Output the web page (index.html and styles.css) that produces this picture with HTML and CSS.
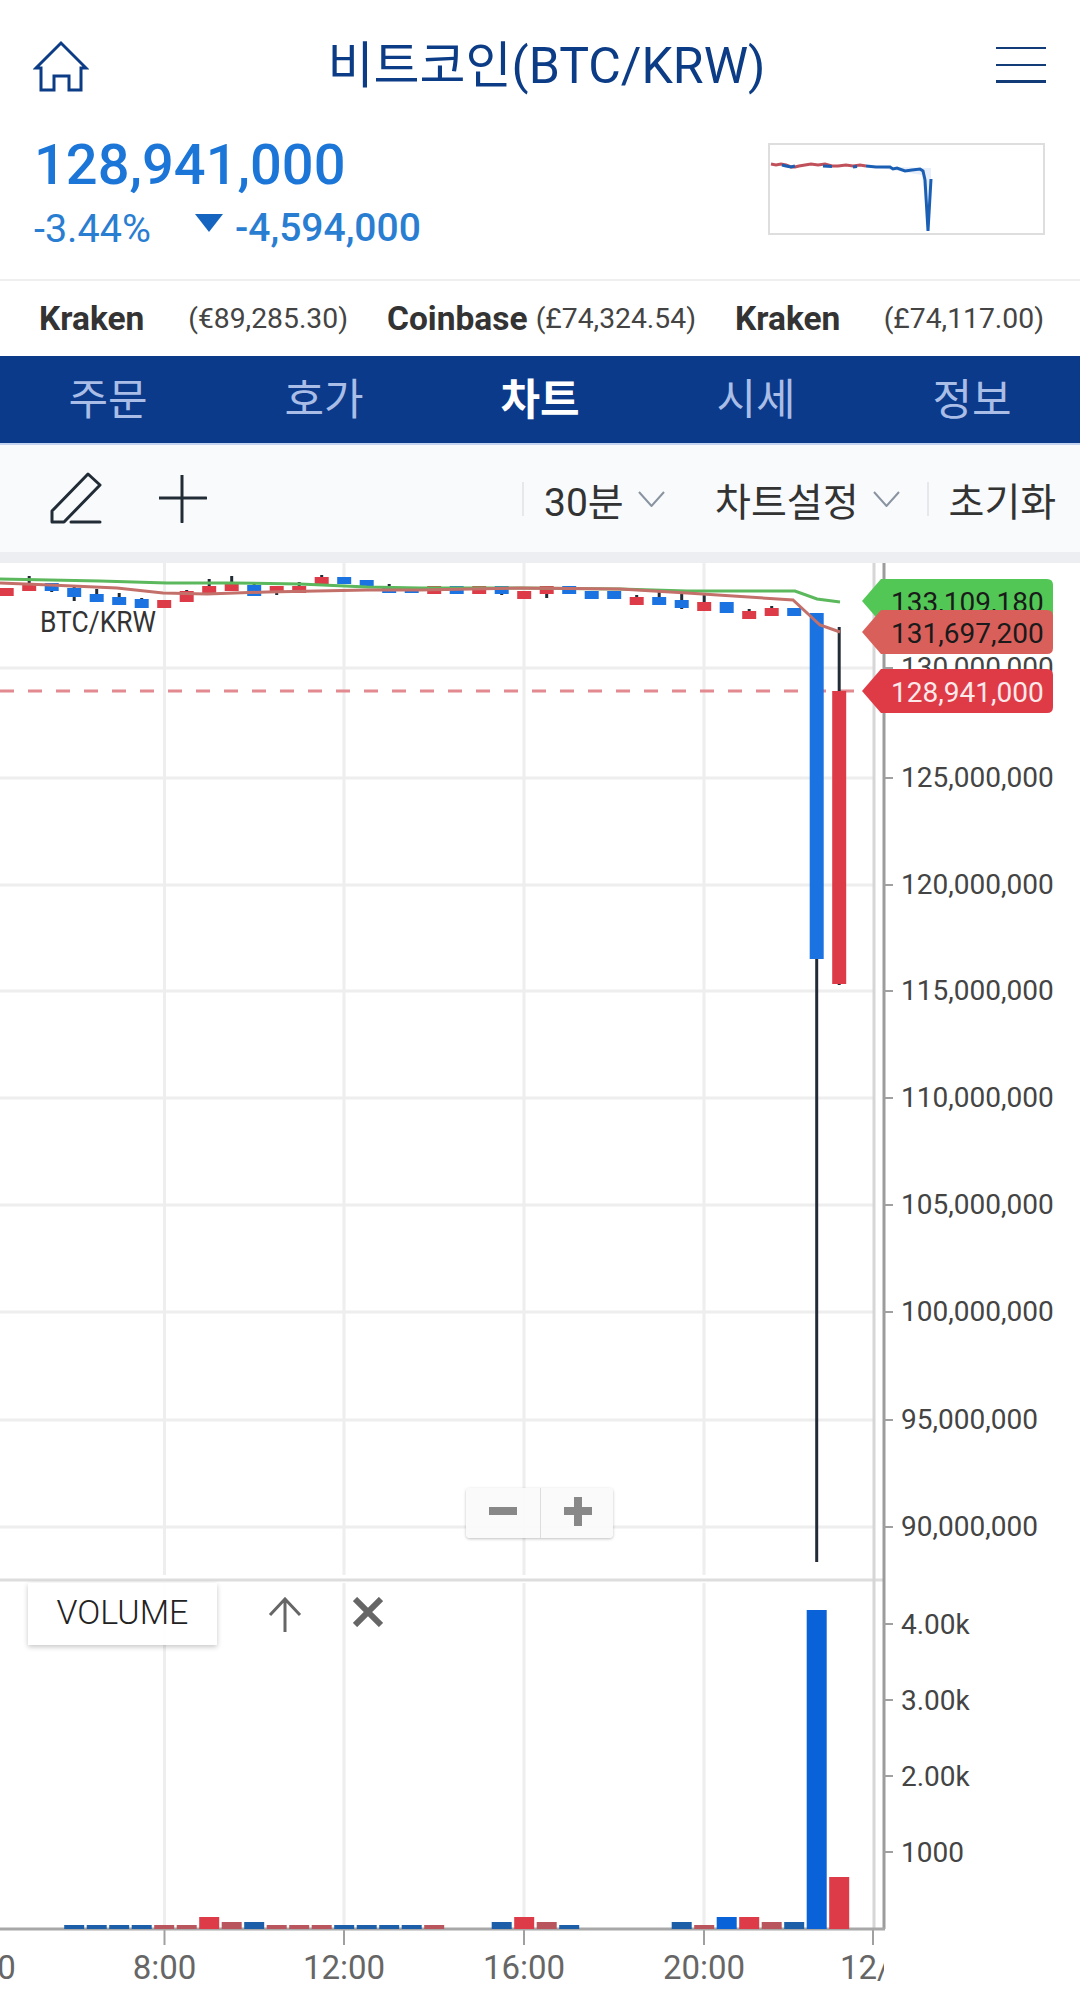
FILE: index.html
```html
<!DOCTYPE html>
<html lang="ko">

<head>
    <meta charset="UTF-8">
    <meta name="viewport" content="width=device-width, initial-scale=1.0">
    <title>비트코인(BTC/KRW)</title>
    <link rel="stylesheet" href="styles.css">
</head>

<body>
    <header class="top-bar">
        <svg class="home-icon" width="56" height="54" viewBox="32 40 56 54">
            <path d="M35 68 L60 43 L85 68 H80 V90 H68 V76 H53 V90 H40 V68 Z" />
        </svg>
        <h1 class="coin-title">비트코인(BTC/KRW)</h1>
        <div class="hamburger"><span></span><span></span><span></span></div>
    </header>

    <section class="quote">
        <div class="quote-text">
            <div class="quote-price">128,941,000</div>
            <div class="quote-change">
                <span class="change-pct">-3.44%</span>
                <span class="change-arrow"></span>
                <span class="change-amt">-4,594,000</span>
            </div>
        </div>
        <svg class="spark" width="277" height="92" viewBox="770 145 273 88">
            <path class="spark-fill" d="M868 166 L925 168 L931 168 L931 200 L928 232 L922 175 Z" />
            <polyline class="spark-red" points="771,164 776,165 781,164 786,165 791,167 795,167 799,166 805,165 811,164 818,165 825,164 832,166 838,166 846,165 853,166 860,165 866,166" />
            <polyline class="spark-blue" points="782,165 786,166 791,167 795,166" />
            <polyline class="spark-blue" points="823,166 832,166.5" />
            <polyline class="spark-blue" points="853,167 857,166.5" />
            <polyline class="spark-blue" points="866,166 876,167 890,167 893,169 897,168 905,171 912,170 920,169 923,171 925,180 928,231 931,179" />
        </svg>
    </section>

    <section class="ticker">
        <div class="ticker-item"><b>Kraken</b><span>(€89,285.30)</span></div>
        <div class="ticker-item"><b>Coinbase</b><span>(£74,324.54)</span></div>
        <div class="ticker-item"><b>Kraken</b><span>(£74,117.00)</span></div>
    </section>

    <nav class="tabs">
        <a>주문</a>
        <a>호가</a>
        <a class="active">차트</a>
        <a>시세</a>
        <a>정보</a>
    </nav>

    <div class="toolbar">
        <svg class="tool-pencil" width="54" height="54" viewBox="50 471 54 54">
            <path d="M88 473 L100 484 L64 521 H52 V510 Z" />
            <path d="M71 521 H100" />
        </svg>
        <svg class="tool-plus" width="48" height="48" viewBox="159 475 48 48">
            <path d="M159 498 H206 M182 475 V522" />
        </svg>
        <div class="tool-right">
            <div class="tool-item first">30분<svg class="chev" width="27" height="16" viewBox="0 0 27 16"><path d="M1 1 L13.5 15 L26 1" /></svg></div>
            <div class="tool-item">차트설정<svg class="chev" width="27" height="16" viewBox="0 0 27 16"><path d="M1 1 L13.5 15 L26 1" /></svg></div>
            <div class="tool-item last">초기화</div>
        </div>
    </div>

    <main class="chart">
        <svg id="chart-svg" width="1080" height="1448" viewBox="0 563 1080 1448"></svg>

        <div class="zoom-ctrl">
            <span class="zoom-btn"><i class="bar-h"></i></span>
            <span class="zoom-btn"><i class="bar-h"></i><i class="bar-v"></i></span>
        </div>

        <div class="volume-tag">VOLUME</div>
        <svg class="vol-up" width="34" height="36" viewBox="0 0 34 36">
            <path d="M17 35 V2 M2 18 L17 2 L32 18" />
        </svg>
        <svg class="vol-close" width="30" height="30" viewBox="0 0 30 30">
            <path d="M2 2 L28 28 M28 2 L2 28" />
        </svg>
    </main>

    <script>
        const svg = document.getElementById('chart-svg');
        const NS = 'http://www.w3.org/2000/svg';

        function add(tag, attrs, text) {
            const el = document.createElementNS(NS, tag);
            for (const key in attrs) el.setAttribute(key, attrs[key]);
            if (text) el.textContent = text;
            svg.appendChild(el);
            return el;
        }

        function line(cls, x1, y1, x2, y2) {
            add('line', { class: cls, x1, y1, x2, y2 });
        }

        // candle: [kind, bodyTop, bodyBottom, wickTop, wickBottom]
        const candles = [
            ['r', 588, 596], ['r', 583, 591, 576], ['b', 583, 591, 0, 592],
            ['b', 588, 597, 587, 601], ['b', 594, 602, 589], ['b', 597, 605, 593],
            ['b', 599, 608, 598], ['r', 600, 608], ['r', 591, 602, 590],
            ['r', 586, 594, 579], ['r', 584, 591, 576], ['b', 585, 596, 582],
            ['r', 586, 593, 0, 595], ['r', 586, 593, 582], ['r', 577, 584, 575],
            ['b', 577, 584], ['b', 580, 587], ['b', 587, 593, 584], ['b', 587, 593],
            ['r', 586, 594], ['b', 586, 594], ['r', 586, 594], ['b', 586, 594, 0, 595],
            ['r', 591, 599], ['r', 586, 594, 0, 598], ['b', 586, 594],
            ['b', 591, 599], ['b', 591, 599], ['r', 597, 605, 595], ['b', 597, 605, 592],
            ['b', 600, 608, 594, 609], ['r', 602, 611, 595], ['b', 602, 613],
            ['r', 611, 619, 609], ['r', 608, 616, 606], ['b', 608, 616],
            ['b', 613, 959, 0, 1562], ['r', 691, 984, 627, 985]
        ];

        // volume bar: [candle index, top]
        const volumes = [
            [3, 1925], [4, 1925], [5, 1925], [6, 1925], [7, 1925], [8, 1925], [9, 1917],
            [10, 1922], [11, 1922], [12, 1925], [13, 1925], [14, 1925], [15, 1925],
            [16, 1925], [17, 1925], [18, 1925], [19, 1925], [22, 1922], [23, 1917],
            [24, 1922], [25, 1925], [30, 1922], [31, 1925], [32, 1917], [33, 1917],
            [34, 1922], [35, 1922], [36, 1610], [37, 1877]
        ];

        const candleX = i => 6.7 + 22.5 * i;
        const priceY = [668, 778, 885, 991, 1098, 1205, 1312, 1420, 1527];
        const priceText = ['130,000,000', '125,000,000', '120,000,000', '115,000,000', '110,000,000',
            '105,000,000', '100,000,000', '95,000,000', '90,000,000'];
        const volY = [1624, 1700, 1776, 1852];
        const volText = ['4.00k', '3.00k', '2.00k', '1000'];
        const timeX = [164.5, 344, 524, 704];
        const timeText = ['8:00', '12:00', '16:00', '20:00'];

        // grid
        timeX.forEach(x => {
            line('grid', x, 563, x, 1575);
            line('grid', x, 1583, x, 1929);
            line('tick', x, 1929, x, 1945);
        });
        priceY.forEach(y => line('grid', 0, y, 873, y));
        line('pane-line', 0, 1580, 884, 1580);
        line('side-light', 874, 563, 874, 1929);
        line('side-dark', 884, 563, 884, 1929);
        line('tick', 873, 1929, 873, 1945);
        line('base-line', 0, 1929, 885, 1929);
        line('dash', 0, 691, 862, 691);

        // axis labels
        priceY.forEach((y, i) => {
            line('axis-tick', 884, y, 893, y);
            add('text', { class: 'axis-text', x: 901, y: y + 9 }, priceText[i]);
        });
        volY.forEach((y, i) => {
            line('axis-tick', 884, y, 893, y);
            add('text', { class: 'axis-text', x: 901, y: y + 10 }, volText[i]);
        });
        timeText.forEach((t, i) => {
            add('text', { class: 'time-text', x: timeX[i], y: 1979, 'text-anchor': 'middle' }, t);
        });
        add('text', { class: 'time-text', x: -16, y: 1979, 'text-anchor': 'middle' }, '4:00');
        const clip = add('clipPath', { id: 'date-clip' });
        const clipRect = document.createElementNS(NS, 'rect');
        clipRect.setAttribute('x', 830);
        clipRect.setAttribute('y', 1940);
        clipRect.setAttribute('width', 54);
        clipRect.setAttribute('height', 60);
        clip.appendChild(clipRect);
        add('text', { class: 'time-text', x: 840, y: 1979, 'clip-path': 'url(#date-clip)' }, '12/11');

        // candles
        candles.forEach((c, i) => {
            const x = candleX(i);
            const top = c[3] || c[1];
            const bottom = c[4] || c[2];
            if (top < c[1] || bottom > c[2]) line('wick', x, top, x, bottom);
            add('rect', { class: c[0] === 'r' ? 'candle-red' : 'candle-blue', x: x - 7, y: c[1], width: 14, height: c[2] - c[1] });
        });

        // moving averages
        add('polyline', { class: 'ma-green', points: '0,579 100,581 167,583 233,583 300,584 367,587 420,588 520,588 620,589 687,591 795,591 817,599 840,602' });
        add('polyline', { class: 'ma-coral', points: '0,583 50,585 117,588 163,593 207,594 267,592 367,590 420,590 520,588 620,589 687,593 793,600 820,625 840,632' });

        // volume bars
        volumes.forEach(v => {
            const tall = 1929 - v[1] > 8;
            const red = candles[v[0]][0] === 'r';
            const cls = (red ? 'vol-red' : 'vol-blue') + (tall ? '' : ' small');
            add('rect', { class: cls, x: candleX(v[0]) - 10, y: v[1], width: 20, height: 1929 - v[1] });
        });

        add('text', { class: 'pair-text', x: 40, y: 632, textLength: 116, lengthAdjust: 'spacingAndGlyphs' }, 'BTC/KRW');

        // price tags
        function priceTag(cls, top, text, textCls) {
            const bottom = top + 44;
            const mid = top + 22;
            add('path', { class: cls, d: `M862 ${mid} L881 ${top} H1047 Q1053 ${top} 1053 ${top + 6} V${bottom - 6} Q1053 ${bottom} 1047 ${bottom} H881 Z` });
            add('text', { class: textCls, x: 891, y: mid + 11 }, text);
        }
        priceTag('tag-green', 579, '133,109,180', 'tag-text');
        priceTag('tag-coral', 610, '131,697,200', 'tag-text');
        priceTag('tag-red', 669, '128,941,000', 'tag-text light');
    </script>
</body>

</html>
```
FILE: styles.css
```css
* {
    box-sizing: border-box;
}

body {
    margin: 0;
    width: 1080px;
    height: 2011px;
    overflow: hidden;
    background-color: #fff;
    color: #333;
    font-family: Roboto, "Noto Sans CJK KR", sans-serif;
}

.top-bar {
    display: flex;
    align-items: center;
    justify-content: space-between;
    height: 130px;
    padding: 0 34px 0 33px;
}

.home-icon {
    margin-top: 3px;
    fill: none;
    stroke: #0c3c86;
    stroke-width: 3;
}

.coin-title {
    margin: 0 0 8px 8px;
    font-size: 50px;
    font-weight: 400;
    color: #0c3c86;
}

.hamburger {
    display: flex;
    flex-direction: column;
    justify-content: space-between;
    width: 50px;
    height: 36px;
}

.hamburger span {
    display: block;
    height: 2px;
    background-color: #123c78;
}

.hamburger span:last-child {
    height: 3px;
}

.quote {
    display: flex;
    justify-content: space-between;
    height: 151px;
    padding: 13px 35px 0 34px;
    border-bottom: 2px solid #efefef;
}

.quote-text {
    margin-top: -8px;
}

.quote-price {
    font-size: 56px;
    line-height: 60px;
    font-weight: 500;
    color: #1b76d8;
}

.quote-change {
    display: flex;
    align-items: center;
    margin-top: 11px;
    height: 44px;
    font-size: 39.5px;
    color: #2a7ed2;
}

.change-pct {
    width: 161px;
}

.change-arrow {
    width: 0;
    height: 0;
    margin-right: 12px;
    margin-bottom: 10px;
    border-left: 14px solid transparent;
    border-right: 14px solid transparent;
    border-top: 18px solid #1565c0;
}

.change-amt {
    font-weight: 500;
    font-size: 39px;
}

.spark {
    border: 2px solid #dedede;
}

.spark-fill {
    fill: #e6eefa;
}

.spark-red,
.spark-blue {
    fill: none;
    stroke-width: 3;
}

.spark-red {
    stroke: #c0505a;
}

.spark-blue {
    stroke: #1a5fb4;
}

.ticker {
    display: grid;
    grid-template-columns: repeat(3, 309px);
    column-gap: 39px;
    height: 75px;
    padding-left: 39px;
    align-items: center;
}

.ticker-item {
    display: flex;
    justify-content: space-between;
    align-items: center;
    font-size: 28.3px;
    color: #444;
}

.ticker-item b {
    font-size: 33.5px;
    font-weight: 700;
    color: #333;
}

.tabs {
    display: grid;
    grid-template-columns: repeat(5, 216px);
    height: 89px;
    padding-bottom: 8px;
    background-color: #0b3a8a;
    border-bottom: 2px solid #c3d3f0;
    align-items: center;
    text-align: center;
    font-size: 43px;
    color: #a9bde6;
}

.tabs .active {
    color: #fff;
    font-weight: 700;
}

.toolbar {
    display: flex;
    align-items: center;
    height: 118px;
    padding: 0 0 0 50px;
    background-color: #f8fafc;
    border-bottom: 11px solid #eceef2;
}

.tool-pencil {
    fill: none;
    stroke: #222c36;
    stroke-width: 3;
    stroke-linejoin: round;
    stroke-linecap: round;
}

.tool-plus {
    margin-left: 55px;
    fill: none;
    stroke: #222c36;
    stroke-width: 3;
    stroke-linecap: round;
}

.tool-right {
    display: flex;
    align-items: center;
    margin-left: 315px;
    font-size: 39px;
    color: #333;
}

.tool-item {
    display: flex;
    align-items: center;
    height: 34px;
    white-space: nowrap;
}

.tool-item.first {
    padding-left: 20px;
    border-left: 2px solid #e6e8ec;
    width: 193px;
}

.tool-item.last {
    padding-left: 20px;
    border-left: 2px solid #e6e8ec;
    margin-left: 27px;
}

.chev {
    margin-left: 14px;
    fill: none;
    stroke: #8a94a0;
    stroke-width: 2;
}

.chart {
    position: relative;
    height: 1448px;
}

#chart-svg {
    display: block;
}

.grid {
    stroke: #eeeeee;
    stroke-width: 3;
}

.pane-line {
    stroke: #dddddd;
    stroke-width: 3;
}

.side-light {
    stroke: #d6d6d6;
    stroke-width: 3;
}

.side-dark {
    stroke: #9c9c9c;
    stroke-width: 3;
}

.base-line {
    stroke: #a8a8a8;
    stroke-width: 3;
}

.tick,
.axis-tick {
    stroke: #a0a0a0;
    stroke-width: 2;
}

.dash {
    stroke: #e28a90;
    stroke-width: 3;
    stroke-dasharray: 14 14;
}

.axis-text,
.tag-text {
    font-size: 28px;
    fill: #444;
}

.time-text {
    font-size: 33px;
    fill: #666;
}

.pair-text {
    font-size: 30px;
    fill: #333;
}

.wick {
    stroke: #222c36;
    stroke-width: 3;
}

.candle-red {
    fill: #dc3b47;
}

.candle-blue {
    fill: #1a73e0;
}

.ma-green,
.ma-coral {
    fill: none;
    stroke-width: 3;
}

.ma-green {
    stroke: #5cb85c;
}

.ma-coral {
    stroke: #c4706a;
}

.vol-red {
    fill: #dc3b47;
}

.vol-blue {
    fill: #0a62d8;
}

.vol-red.small {
    fill: #b9555c;
}

.vol-blue.small {
    fill: #1c5fa8;
}

.tag-green {
    fill: #52c755;
}

.tag-coral {
    fill: #d9605a;
}

.tag-red {
    fill: #de3b47;
}

.tag-text {
    fill: #1a1a1a;
}

.tag-text.light {
    fill: #fde8ea;
}

.zoom-ctrl {
    position: absolute;
    left: 466px;
    top: 925px;
    display: flex;
    align-items: center;
    width: 147px;
    height: 50px;
    background-color: rgba(250, 250, 250, 0.92);
    border-radius: 4px;
    box-shadow: 0 1px 3px rgba(0, 0, 0, 0.25);
}

.zoom-btn {
    position: relative;
    display: block;
    width: 50%;
    height: 100%;
}

.zoom-btn + .zoom-btn {
    border-left: 1px solid #ddd;
}

.bar-h {
    position: absolute;
    left: 23px;
    top: 19px;
    width: 28px;
    height: 8px;
    background-color: #888;
}

.bar-v {
    position: absolute;
    left: 33px;
    top: 9px;
    width: 8px;
    height: 29px;
    background-color: #888;
}

.volume-tag {
    position: absolute;
    left: 28px;
    top: 1020px;
    width: 189px;
    height: 62px;
    line-height: 58px;
    text-align: center;
    font-size: 34px;
    font-weight: 300;
    color: #222;
    background-color: rgba(255, 255, 255, 0.92);
    box-shadow: 0 2px 5px rgba(0, 0, 0, 0.22);
}

.vol-up {
    position: absolute;
    left: 268px;
    top: 1034px;
    fill: none;
    stroke: #666;
    stroke-width: 3;
}

.vol-close {
    position: absolute;
    left: 353px;
    top: 1034px;
    fill: none;
    stroke: #666;
    stroke-width: 6;
}
```
